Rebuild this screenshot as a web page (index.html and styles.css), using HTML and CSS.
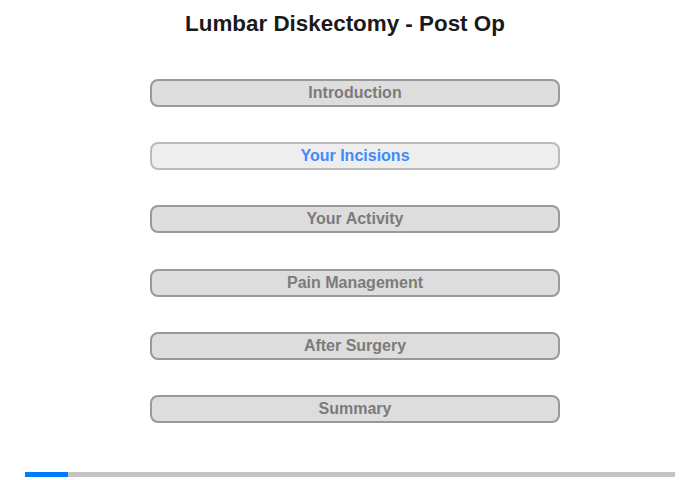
FILE: index.html
```html
<!DOCTYPE html>
<html>
<head>
<meta charset="utf-8">
<link rel="stylesheet" href="styles.css">
</head>
<body>
<div class="page">
  <h1 class="title">Lumbar Diskectomy - Post Op</h1>
  <nav class="menu">
    <div class="btn">Introduction</div>
    <div class="btn active">Your Incisions</div>
    <div class="btn">Your Activity</div>
    <div class="btn">Pain Management</div>
    <div class="btn">After Surgery</div>
    <div class="btn">Summary</div>
  </nav>
  <div class="progress"><div class="fill"></div></div>
</div>
</body>
</html>
```
FILE: styles.css
```css
html, body {
  margin: 0;
  padding: 0;
  background: #fff;
}
.page {
  width: 700px;
  height: 480px;
  display: flex;
  flex-direction: column;
  font-family: "Liberation Sans", Arial, sans-serif;
}
.title {
  margin: 11px 0 0 0;
  width: 690px;
  text-align: center;
  font-size: 22.4px;
  font-weight: bold;
  line-height: 26px;
  color: #1a1a1a;
}
.menu {
  margin: 42px 0 0 150px;
  width: 410px;
  display: flex;
  flex-direction: column;
  gap: 35.2px;
}
.btn {
  box-sizing: border-box;
  height: 28px;
  border: 2px solid #999;
  border-radius: 8px;
  background: #ddd;
  color: #7b7b7b;
  font-size: 16px;
  font-weight: bold;
  line-height: 24px;
  text-align: center;
}
.btn.active {
  background: #eee;
  border-color: #bbb;
  color: #3d8bfd;
}
.progress {
  margin: 49px 0 0 25px;
  width: 650px;
  height: 5px;
  background: #c4c4c4;
}
.fill {
  width: 43px;
  height: 100%;
  background: #007bff;
}
```
